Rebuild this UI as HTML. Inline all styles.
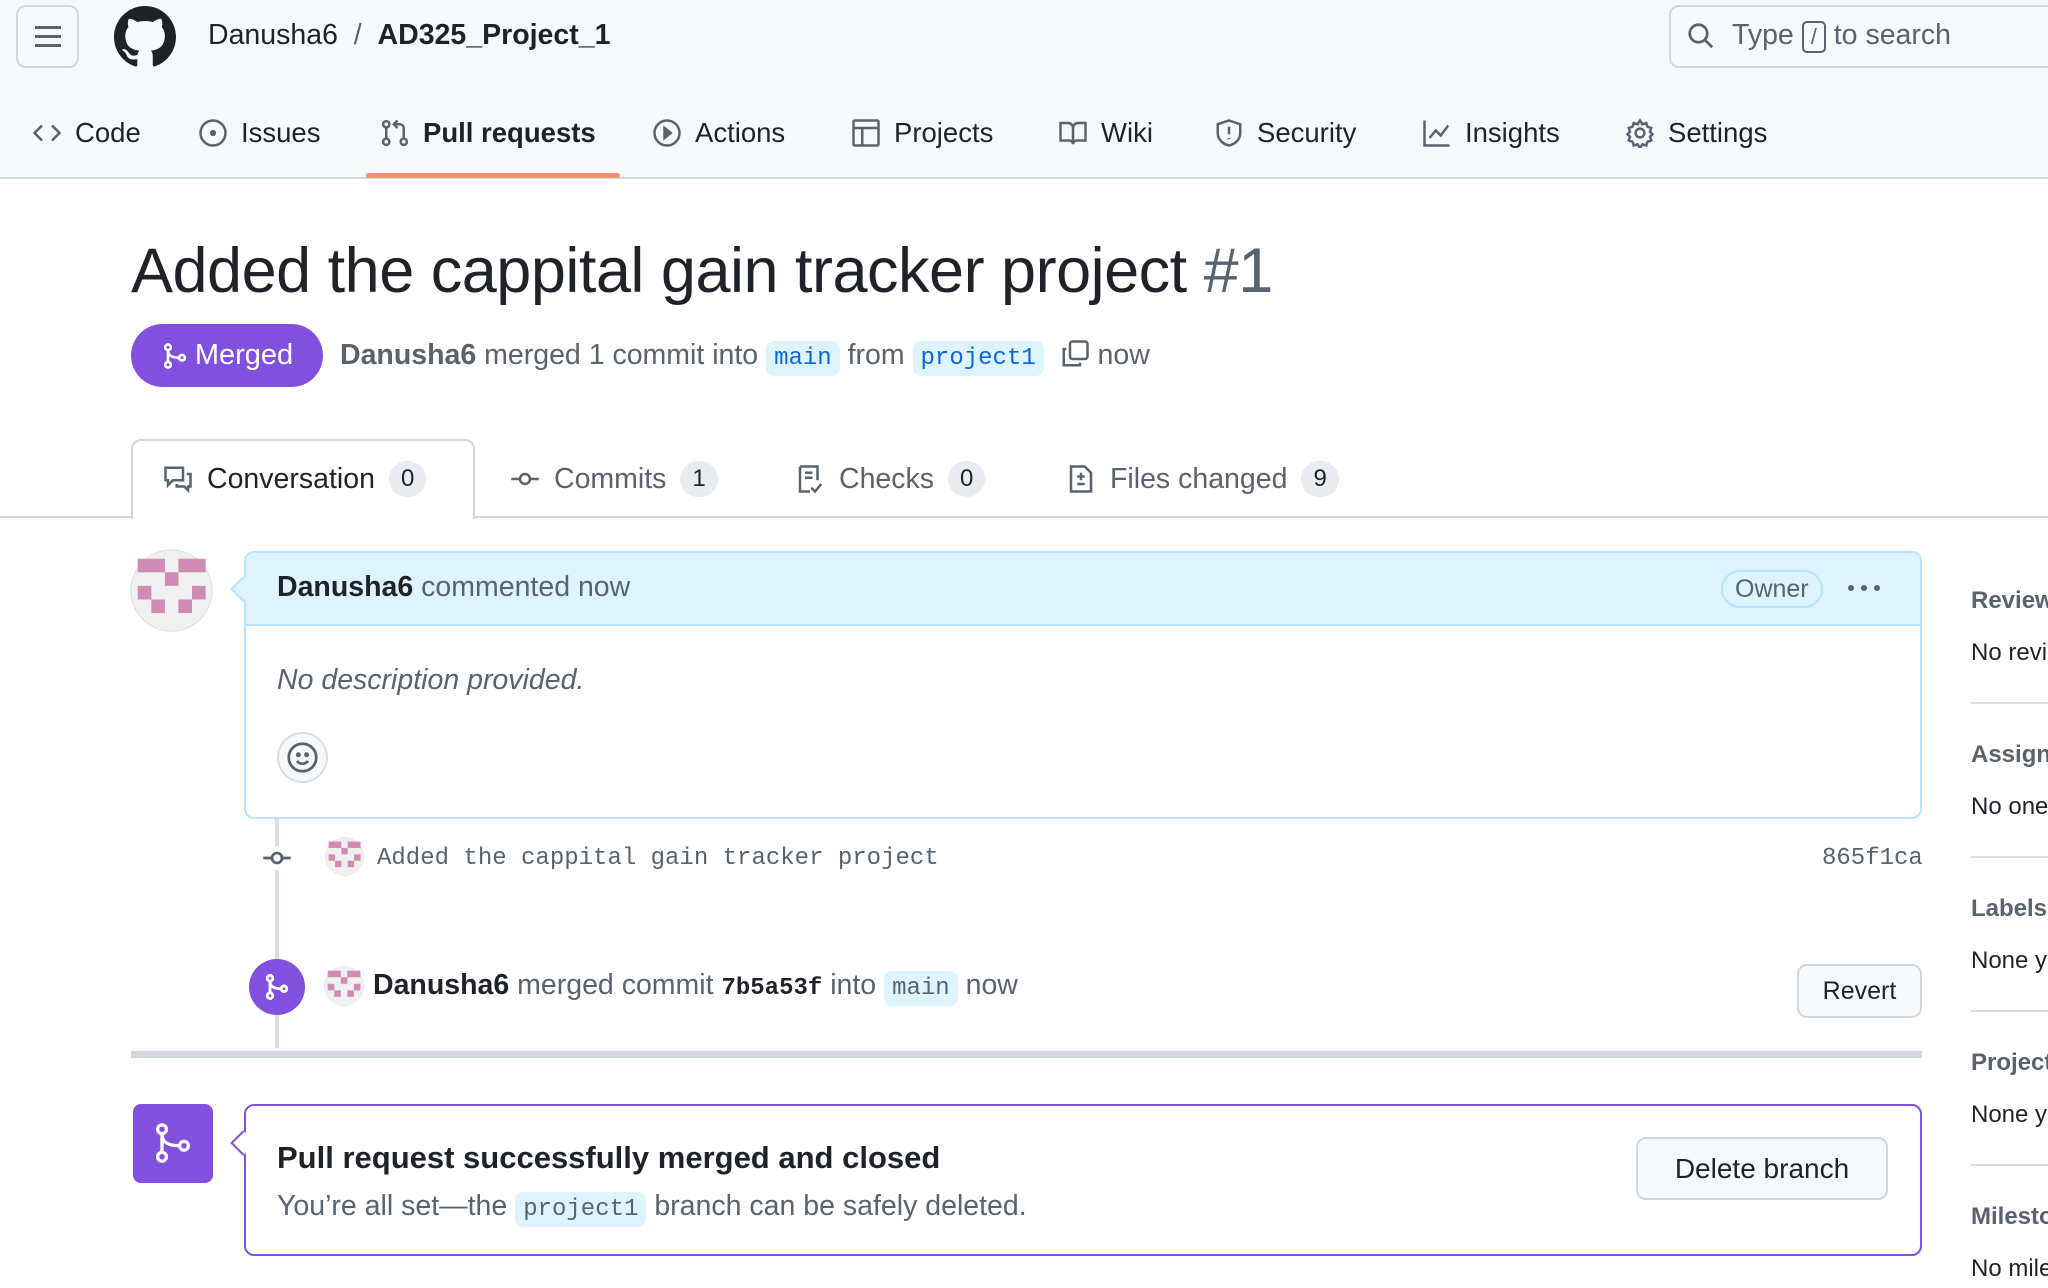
<!DOCTYPE html>
<html><head><meta charset="utf-8"><style>
*{box-sizing:border-box;margin:0;padding:0}
body{width:2048px;height:1288px;overflow:hidden;background:#fff;font-family:"Liberation Sans",sans-serif;color:#1f2328;position:relative}
.a{position:absolute}
.hdr{left:0;top:0;width:2048px;height:179px;background:#f6f8fa;border-bottom:2px solid #d0d7de}
.nav{top:117px;font-size:27.5px;color:#1f2328;display:flex;align-items:center;gap:13px;white-space:nowrap}
.nav svg{width:30px;height:30px;fill:none;stroke:#59636e;stroke-width:2}
.mono{font-family:"Liberation Mono",monospace}
.code{background:#ddf4ff;color:#0969da;border-radius:8px;padding:4px 8px;font-family:"Liberation Mono",monospace;font-size:24px}
.tab{top:461px;font-size:28.5px;display:flex;align-items:center;gap:14px;color:#59636e;white-space:nowrap}
.tab svg{width:30px;height:30px;fill:none;stroke:#59636e;stroke-width:2}
.cnt{background:#e8ebef;border-radius:20px;padding:4px 12px;font-size:24px;color:#1f2328}
.side{left:1971px;font-size:24px;white-space:nowrap}
.sh{font-weight:bold;color:#59636e}
.sl{left:1971px;width:100px;height:2px;background:#d8dee4}
</style></head><body>
<svg width="0" height="0" style="position:absolute"><defs><g id="av"><circle cx="5" cy="5" r="4.9" fill="#f0f0f0" stroke="#ddd" stroke-width="0.12"/><g fill="#d08bb5"><rect x="0.93" y="1.17" width="3.28" height="1.64"/><rect x="5.83" y="1.17" width="3.28" height="1.64"/><rect x="4.2" y="2.8" width="1.64" height="1.64"/><rect x="0.93" y="4.44" width="1.64" height="1.64"/><rect x="7.47" y="4.44" width="1.64" height="1.64"/><rect x="2.57" y="6.08" width="1.64" height="1.64"/><rect x="5.83" y="6.08" width="1.64" height="1.64"/></g></g></defs></svg>
<div class="a hdr"></div>
<div class="a" style="left:16px;top:5px;width:63px;height:63px;border:2px solid #d0d7de;border-radius:10px;background:#f6f8fa"></div>
<div class="a" style="left:35px;top:26px;width:26px;height:3px;background:#59636e;box-shadow:0 9px 0 #59636e,0 18px 0 #59636e"></div>
<svg class="a" style="left:114px;top:6px" width="62" height="62" viewBox="0 0 16 16"><path fill="#1f2328" d="M8 0C3.58 0 0 3.58 0 8c0 3.540 2.29 6.53 5.47 7.59.4.07.55-.17.55-.38 0-.19-.01-.82-.01-1.490-2.01.37-2.530-.49-2.690-.94-.09-.23-.48-.94-.82-1.13-.28-.15-.68-.52-.01-.53.63-.01 1.08.58 1.23.82.72 1.21 1.87.87 2.33.66.07-.52.28-.87.51-1.07-1.78-.2-3.64-.89-3.64-3.95 0-.87.31-1.59.82-2.150-.08-.2-.36-1.02.08-2.12 0 0 .67-.21 2.2.82.64-.18 1.32-.27 2-.27.68 0 1.36.09 2 .27 1.53-1.04 2.2-.82 2.2-.82.44 1.1.16 1.92.08 2.12.51.56.82 1.27.82 2.15 0 3.07-1.87 3.75-3.65 3.95.29.25.54.73.54 1.48 0 1.07-.01 1.93-.01 2.2 0 .21.15.46.55.38A8.013 8.013 0 0016 8c0-4.42-3.58-8-8-8z"/></svg>
<div class="a" style="left:208px;top:19px;font-size:28.5px;white-space:nowrap">Danusha6 &nbsp;<span style="color:#59636e">/</span>&nbsp; <b>AD325_Project_1</b></div>
<div class="a" style="left:1669px;top:5px;width:420px;height:63px;border:2px solid #d0d7de;border-radius:10px;background:#f6f8fa"></div>
<svg class="a" style="left:1686px;top:21px" width="30" height="30" viewBox="0 0 24 24" fill="none" stroke="#59636e" stroke-width="2.2"><circle cx="10" cy="10" r="7"/><path d="M15 15l6 6"/></svg>
<div class="a" style="left:1732px;top:19px;font-size:28.5px;color:#59636e;white-space:nowrap">Type <span style="display:inline-block;border:2px solid #59636e;border-radius:5px;padding:0 7px;font-size:22px;line-height:28px">/</span> to search</div>

<div class="a nav" style="left:32px"><svg viewBox="0 0 24 24"><path d="M8 6l-6 6 6 6M16 6l6 6-6 6"/></svg>Code</div>
<div class="a nav" style="left:198px"><svg viewBox="0 0 24 24"><circle cx="12" cy="12" r="10"/><circle cx="12" cy="12" r="1.5" fill="#59636e"/></svg>Issues</div>
<div class="a nav" style="left:380px;font-weight:bold"><svg viewBox="0 0 24 24"><circle cx="5" cy="19" r="2.5"/><circle cx="5" cy="5" r="2.5"/><circle cx="19" cy="19" r="2.5"/><path d="M5 8v8M19 16V8a3 3 0 00-3-3h-4M14 2l-3 3 3 3"/></svg>Pull requests</div>
<div class="a" style="left:366px;top:173px;width:254px;height:5px;background:#fd8c73;border-radius:3px"></div>
<div class="a nav" style="left:652px"><svg viewBox="0 0 24 24"><circle cx="12" cy="12" r="10"/><path d="M10 8l5 4-5 4z" fill="#59636e"/></svg>Actions</div>
<div class="a nav" style="left:851px"><svg viewBox="0 0 24 24"><rect x="2" y="2" width="20" height="20" rx="1"/><path d="M2 8h20M9 8v14"/></svg>Projects</div>
<div class="a nav" style="left:1058px"><svg viewBox="0 0 24 24"><path d="M2 4h6a4 4 0 014 4v13a3 3 0 00-3-3H2zM22 4h-6a4 4 0 00-4 4v13a3 3 0 013-3h7z"/></svg>Wiki</div>
<div class="a nav" style="left:1214px"><svg viewBox="0 0 24 24"><path d="M12 2l9 3v7c0 5-4 9-9 10-5-1-9-5-9-10V5z"/><path d="M12 7v6M12 16v1"/></svg>Security</div>
<div class="a nav" style="left:1422px"><svg viewBox="0 0 24 24"><path d="M2 2v20h20M6 16l5-6 4 4 6-8"/></svg>Insights</div>
<div class="a nav" style="left:1625px"><svg viewBox="0 0 24 24"><circle cx="12" cy="12" r="3.5"/><path d="M12 2l2 3 3-1 1 3 3 1-1 3 2 2-2 2 1 3-3 1-1 3-3-1-2 3-2-3-3 1-1-3-3-1 1-3-2-2 2-2-1-3 3-1 1-3 3 1z"/></svg>Settings</div>

<div class="a" style="left:131px;top:235px;font-size:63px;white-space:nowrap;letter-spacing:-0.5px">Added the cappital gain tracker project <span style="color:#59636e">#1</span></div>
<div class="a" style="left:131px;top:324px;width:192px;height:63px;background:#8250df;border-radius:32px;color:#fff;font-size:29px;display:flex;align-items:center;justify-content:center;gap:6px"><svg width="28" height="28" viewBox="0 0 16 16" fill="none" stroke="#fff" stroke-width="1.5"><circle cx="4" cy="3" r="1.6"/><circle cx="4" cy="13" r="1.6"/><circle cx="12" cy="9" r="1.6"/><path d="M4 4.6v6.8M4 5c0 3 3 4 6.4 4"/></svg>Merged</div>
<div class="a" style="left:340px;top:339px;font-size:28.5px;color:#59636e;white-space:nowrap"><b style="color:#59636e">Danusha6</b> merged 1 commit into <span class="code">main</span> from <span class="code">project1</span> &nbsp;<svg width="30" height="30" viewBox="0 0 24 24" fill="none" stroke="#59636e" stroke-width="2" style="vertical-align:-5px"><rect x="8" y="2" width="14" height="14" rx="2"/><path d="M5 8H3v13h13v-2"/></svg> now</div>

<div class="a" style="left:0;top:516px;width:2048px;height:2px;background:#d0d7de"></div>
<div class="a" style="left:131px;top:439px;width:344px;height:80px;border:2px solid #d0d7de;border-bottom:none;border-radius:10px 10px 0 0;background:#fff"></div>
<div class="a tab" style="left:163px;color:#1f2328"><svg viewBox="0 0 24 24"><path d="M2 3h14v10H8l-4 4v-4H2zM19 8h3v10h-2v3l-3-3h-6v-2"/></svg>Conversation <span class="cnt">0</span></div>
<div class="a tab" style="left:510px"><svg viewBox="0 0 24 24"><circle cx="12" cy="12" r="4"/><path d="M1 12h7M16 12h7"/></svg>Commits <span class="cnt">1</span></div>
<div class="a tab" style="left:795px"><svg viewBox="0 0 24 24"><path d="M4 2h14v11M4 2v20h8M8 7h6M8 11h6M13 19l3 3 5-6"/></svg>Checks <span class="cnt">0</span></div>
<div class="a tab" style="left:1066px"><svg viewBox="0 0 24 24"><path d="M4 2h11l5 5v15H4zM12 7v6M9 10h6M9 16h6"/></svg>Files changed <span class="cnt">9</span></div>

<div class="a" style="left:275px;top:818px;width:4px;height:230px;background:#d8dee4"></div>
<svg class="a" style="left:130px;top:549px" width="83" height="83" viewBox="0 0 10 10"><use href="#av"/></svg>
<div class="a" style="left:244px;top:551px;width:1678px;height:268px;border:2px solid #b6e3ff;border-radius:10px;overflow:hidden"><div style="height:73px;background:#ddf4ff;border-bottom:2px solid #b6e3ff"></div></div>
<div class="a" style="left:234px;top:580px;width:18px;height:18px;background:#ddf4ff;border-left:2px solid #b6e3ff;border-bottom:2px solid #b6e3ff;transform:rotate(45deg)"></div>
<div class="a" style="left:277px;top:571px;font-size:28.5px;color:#59636e;white-space:nowrap"><b style="color:#1f2328">Danusha6</b> commented now</div>
<div class="a" style="left:1721px;top:570px;height:38px;border:2px solid #b6e3ff;border-radius:20px;padding:0 12px;font-size:25px;line-height:34px;color:#59636e">Owner</div>
<div class="a" style="left:1848px;top:585px;width:6px;height:6px;border-radius:3px;background:#59636e;box-shadow:13px 0 0 #59636e,26px 0 0 #59636e"></div>
<div class="a" style="left:277px;top:664px;font-size:28.5px;font-style:italic;color:#59636e">No description provided.</div>
<div class="a" style="left:277px;top:732px;width:51px;height:51px;border:2px solid #d8dee4;border-radius:50%;background:#f6f8fa"></div>
<svg class="a" style="left:286px;top:741px" width="33" height="33" viewBox="0 0 24 24" fill="none" stroke="#59636e" stroke-width="2"><circle cx="12" cy="12" r="10"/><circle cx="9" cy="10" r="0.8" fill="#59636e"/><circle cx="15" cy="10" r="0.8" fill="#59636e"/><path d="M8 14.5a5 5 0 008 0"/></svg>

<div class="a" style="left:264px;top:846px;width:26px;height:24px;background:#fff"></div>
<svg class="a" style="left:260px;top:843px" width="34" height="30" viewBox="0 0 24 24" fill="none" stroke="#59636e" stroke-width="2.2"><circle cx="12" cy="12" r="4"/><path d="M1 12h7M16 12h7"/></svg>
<svg class="a" style="left:325px;top:837px" width="39" height="39" viewBox="0 0 10 10"><use href="#av"/></svg>
<div class="a mono" style="left:377px;top:845px;font-size:24px;color:#59636e;white-space:nowrap">Added the cappital gain tracker project</div>
<div class="a mono" style="left:1822px;top:845px;font-size:24px;color:#59636e">865f1ca</div>

<div class="a" style="left:249px;top:959px;width:56px;height:56px;border-radius:50%;background:#8250df"></div>
<svg class="a" style="left:263px;top:973px" width="28" height="28" viewBox="0 0 16 16" fill="none" stroke="#fff" stroke-width="1.6"><circle cx="4" cy="3" r="1.6"/><circle cx="4" cy="13" r="1.6"/><circle cx="12" cy="9" r="1.6"/><path d="M4 4.6v6.8M4 5c0 3 3 4 6.4 4"/></svg>
<svg class="a" style="left:324px;top:966px" width="40" height="40" viewBox="0 0 10 10"><use href="#av"/></svg>
<div class="a" style="left:373px;top:969px;font-size:28.5px;color:#59636e;white-space:nowrap"><b style="color:#1f2328">Danusha6</b> merged commit <b class="mono" style="color:#1f2328;font-size:24px">7b5a53f</b> into <span class="code" style="color:#59636e">main</span> now</div>
<div class="a" style="left:1797px;top:964px;width:125px;height:54px;border:2px solid #d0d7de;border-radius:10px;background:#f6f8fa;font-size:25px;text-align:center;line-height:50px">Revert</div>

<div class="a" style="left:131px;top:1051px;width:1791px;height:7px;background:#d0d7de"></div>

<div class="a" style="left:133px;top:1104px;width:80px;height:79px;border-radius:8px;background:#8250df"></div>
<svg class="a" style="left:151px;top:1121px" width="44" height="44" viewBox="0 0 16 16" fill="none" stroke="#fff" stroke-width="1.2"><circle cx="4" cy="3" r="1.6"/><circle cx="4" cy="13" r="1.6"/><circle cx="12" cy="9" r="1.6"/><path d="M4 4.6v6.8M4 5c0 3 3 4 6.4 4"/></svg>
<div class="a" style="left:244px;top:1104px;width:1678px;height:152px;border:2px solid #8250df;border-radius:10px"></div>
<div class="a" style="left:234px;top:1134px;width:18px;height:18px;background:#fff;border-left:2px solid #8250df;border-bottom:2px solid #8250df;transform:rotate(45deg)"></div>
<div class="a" style="left:277px;top:1140px;font-size:31px;font-weight:bold;white-space:nowrap">Pull request successfully merged and closed</div>
<div class="a" style="left:277px;top:1190px;font-size:28.5px;color:#59636e;white-space:nowrap">You’re all set—the <span class="code" style="color:#59636e">project1</span> branch can be safely deleted.</div>
<div class="a" style="left:1636px;top:1137px;width:252px;height:63px;border:2px solid #d0d7de;border-radius:10px;background:#f6f8fa;font-size:28px;text-align:center;line-height:59px">Delete branch</div>

<div class="a side sh" style="top:587px">Reviewers</div>
<div class="a side" style="top:639px">No reviews</div>
<div class="a sl" style="top:702px"></div>
<div class="a side sh" style="top:741px">Assignees</div>
<div class="a side" style="top:793px">No one</div>
<div class="a sl" style="top:856px"></div>
<div class="a side sh" style="top:895px">Labels</div>
<div class="a side" style="top:947px">None yet</div>
<div class="a sl" style="top:1010px"></div>
<div class="a side sh" style="top:1049px">Projects</div>
<div class="a side" style="top:1101px">None yet</div>
<div class="a sl" style="top:1164px"></div>
<div class="a side sh" style="top:1203px">Milestone</div>
<div class="a side" style="top:1255px">No milestone</div>
</body></html>
